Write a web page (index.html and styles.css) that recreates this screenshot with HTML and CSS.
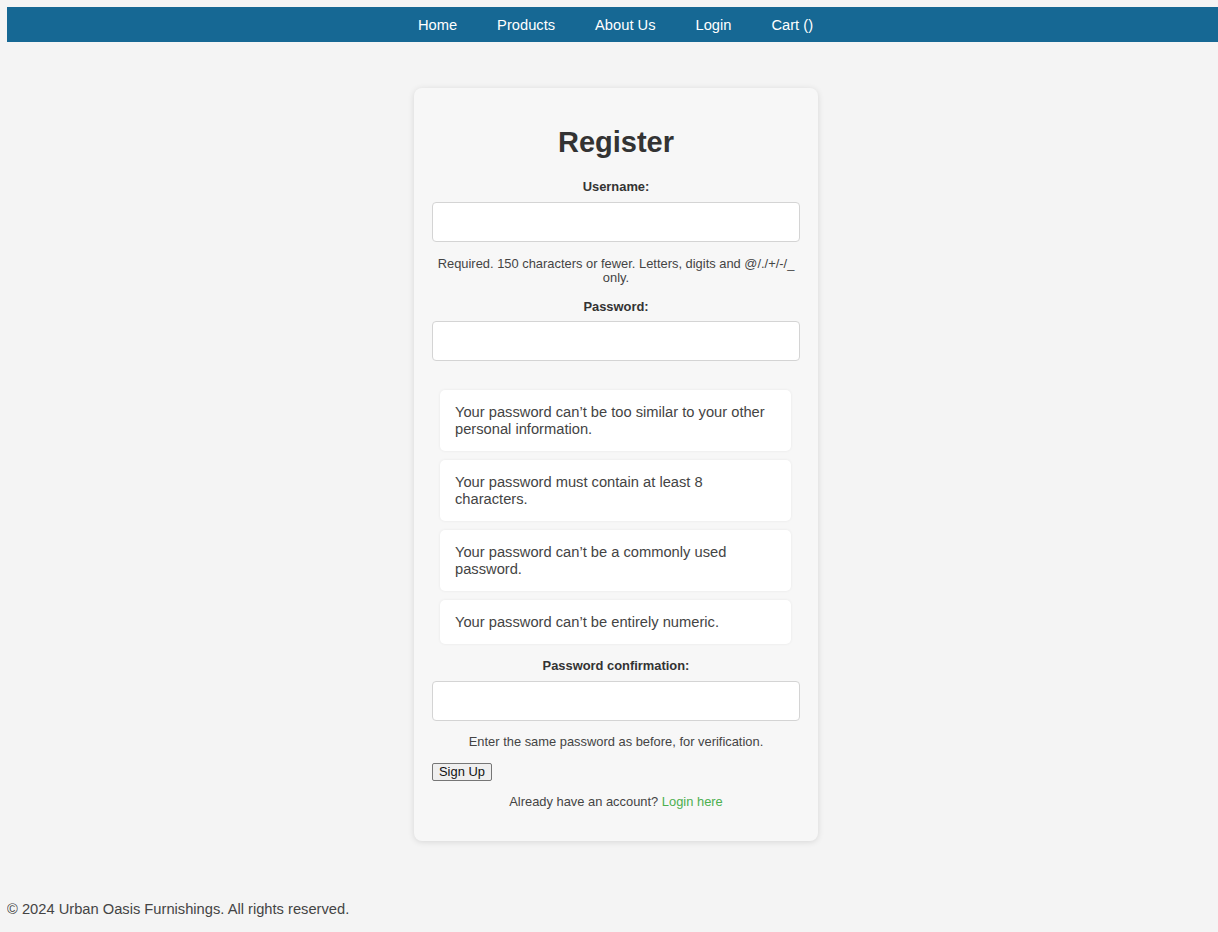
FILE: index.html
```html
<!DOCTYPE html>
<html lang="en">
<head>
<meta charset="utf-8">
<title>Register</title>
<link rel="stylesheet" href="styles.css">
</head>
<body>
<nav class="nav">
  <a href="#" class="nav-link">Home</a>
  <a href="#" class="nav-link">Products</a>
  <a href="#" class="nav-link">About Us</a>
  <a href="#" class="nav-link">Login</a>
  <a href="#" class="nav-link">Cart ()</a>
</nav>
<main class="main">
  <div class="card">
    <h1 class="title">Register</h1>
    <form class="form">
      <label class="label">Username:</label>
      <input class="input" type="text">
      <p class="help help-user">Required. 150 characters or fewer. Letters, digits and @/./+/-/_ only.</p>
      <label class="label">Password:</label>
      <input class="input input-pw" type="password">
      <ul class="rules">
        <li class="rule">Your password can’t be too similar to your other personal information.</li>
        <li class="rule">Your password must contain at least 8 characters.</li>
        <li class="rule">Your password can’t be a commonly used password.</li>
        <li class="rule">Your password can’t be entirely numeric.</li>
      </ul>
      <label class="label">Password confirmation:</label>
      <input class="input" type="password">
      <p class="help help-confirm">Enter the same password as before, for verification.</p>
      <div class="actions"><button type="button" class="btn">Sign Up</button></div>
    </form>
    <p class="login">Already have an account? <a href="#" class="login-link">Login here</a></p>
  </div>
</main>
<footer class="footer">© 2024 Urban Oasis Furnishings. All rights reserved.</footer>
</body>
</html>
```
FILE: styles.css
```css
html, body {
  background: #f4f4f4;
}
body {
  margin: 7px 0 0 7px;
  font-family: "Liberation Sans", Arial, sans-serif;
  color: #333;
}
.nav {
  background: #166894;
  height: 35px;
  display: flex;
  justify-content: center;
  align-items: center;
  padding-left: 6px;
}
.nav-link {
  color: #fff;
  text-decoration: none;
  font-size: 14.7px;
  padding: 0 20px;
}
.main {
  display: flex;
  justify-content: center;
  padding-top: 46px;
  padding-left: 7px;
}
.card {
  width: 404px;
  box-sizing: border-box;
  background: #f7f7f7;
  border-radius: 8px;
  box-shadow: 0 1px 6px rgba(0,0,0,0.12);
  padding: 18px;
}
.title {
  margin: 19px 0 0;
  font-size: 29px;
  line-height: 34px;
  text-align: center;
  color: #333;
}
.form {
  display: flex;
  flex-direction: column;
}
.label {
  font-size: 12.9px;
  line-height: 14px;
  font-weight: bold;
  text-align: center;
  color: #333;
  margin-top: 21px;
}
.label ~ .label {
  margin-top: 15px;
}
.input {
  margin-top: 8px;
  height: 40px;
  box-sizing: border-box;
  border: 1px solid #d4d4d4;
  border-radius: 4px;
  background: #fff;
}
.input-pw {
  margin-top: 7px;
}
.help {
  margin: 15px 0 0;
  font-size: 12.9px;
  line-height: 14px;
  text-align: center;
  color: #444;
}
.help-confirm {
  margin-top: 14px;
}
.rules {
  list-style: none;
  margin: 29px 9px 0 8px;
  padding: 0;
  display: flex;
  flex-direction: column;
  gap: 9px;
}
.rule {
  background: #fff;
  border-radius: 5px;
  box-shadow: 0 0 3px rgba(0,0,0,0.07);
  padding: 14px 20px 13px 15px;
  font-size: 14.7px;
  line-height: 17px;
  color: #444;
}
.actions {
  margin-top: 14px;
  display: flex;
}
.btn {
  font-family: "Liberation Sans", Arial, sans-serif;
  font-size: 12.9px;
  line-height: 14px;
  height: 18px;
  padding: 0 6px;
  border: 1px solid #767676;
  border-radius: 2px;
  background: #efefef;
  color: #111;
}
.login {
  margin: 14px 0 14px;
  font-size: 12.9px;
  line-height: 14px;
  text-align: center;
  color: #444;
}
.login-link {
  color: #4caf50;
  text-decoration: none;
}
.footer {
  margin-top: 60px;
  font-size: 14.7px;
  line-height: 16px;
  color: #444;
}
```
